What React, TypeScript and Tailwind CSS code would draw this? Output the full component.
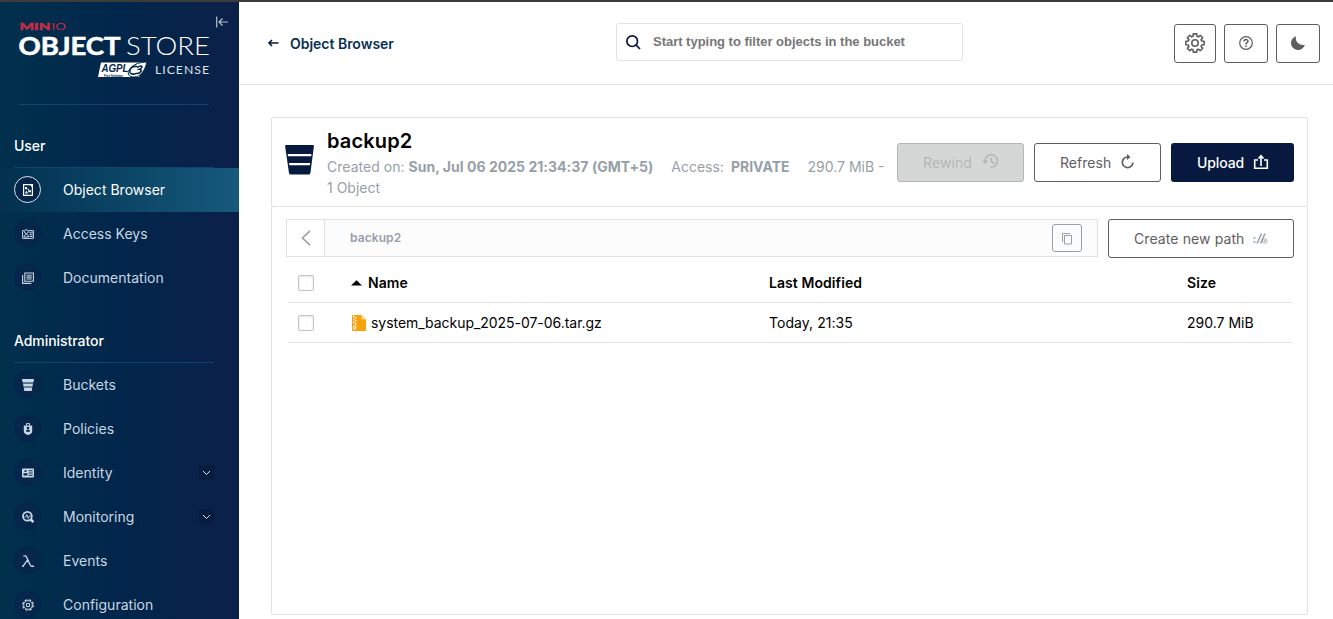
import type { ReactNode } from "react";

function Logo() {
  return (
    <svg width="192" height="58" viewBox="0 0 192 58" fill="#fff" fontFamily="Lato, sans-serif">
      <text x="1.5" y="9.700" fontSize="10" fontWeight="900" fill="#c72c48" stroke="#c72c48" strokeWidth=".4" textLength="31" lengthAdjust="spacingAndGlyphs">MIN</text>
      <text x="33.500" y="9.700" fontSize="10" fontWeight="400" fill="#c72c48" textLength="14.500" lengthAdjust="spacingAndGlyphs">IO</text>
      <text x="0.500" y="35.300" fontSize="25" fontWeight="700" stroke="#fff" strokeWidth=".6" textLength="102" lengthAdjust="spacingAndGlyphs">OBJECT</text>
      <text x="108" y="35.300" fontSize="25" fontWeight="300" textLength="84" lengthAdjust="spacingAndGlyphs">STORE</text>
      <path d="M83 42.500h45l-7 14.500H80z" />
      <text x="83.500" y="52" fontSize="11" fontWeight="700" fontStyle="italic" fill="#03254b" fontFamily="Liberation Sans, sans-serif" textLength="27" lengthAdjust="spacingAndGlyphs">AGPL</text>
      <text x="86" y="56.600" fontSize="3" fontWeight="700" fill="#03254b" fontFamily="Liberation Sans, sans-serif" textLength="19">Free Software</text>
      <path d="M129 42c-8 0-15 3-18 8-2 4 0 7 5 7 7 0 11-7 13-15z" stroke="#03254b" strokeWidth="1" />
      <path d="M119 46.500c-5-1-8 3-7 6 1 2 4 2 6 1M119 47.500c5-3 7-.5 2.500 1.800 3.500.2 1 4.700-4 4.200" fill="none" stroke="#03254b" strokeWidth="1.600" />
      <text x="137" y="53.500" fontSize="12.300" fontWeight="400" fill="#dbe3ea" textLength="54" lengthAdjust="spacing">LICENSE</text>
    </svg>
  );
}

const icons: Record<string, ReactNode> = {
  browser: (
    <>
      <path d="M1.600.6H10.400V11.400H1.600z" fill="none" stroke="currentColor" strokeWidth="1.200" />
      <path d="M7.500.6h3v3zM3 3h2.200v2.200H3zM6.300 6.200h2.700v2H6.300zM3 9.600l1.500-3 1.500 3zM5.500 5.400l.8-.8.8.8-.8.8z" />
    </>
  ),
  keys: (
    <>
      <path d="M2 2.600H.6v7.800h10.800V2.600H6.600" fill="none" stroke="currentColor" strokeWidth="1" />
      <path d="M7.600 3.800h1.200v1.600H7.600zM9.400 3.800h1.200v1.600H9.400zM7.600 6.200h3v1h-3zM7.600 8h3v1h-3z" />
      <circle cx="4.300" cy="3.600" r="1.900" fill="none" stroke="currentColor" />
      <path d="M2 9c0-3.500 4.600-3.500 4.600 0z" fill="none" stroke="currentColor" />
    </>
  ),
  docs: (
    <path d="M2.800 1h8.600v8.200H2.800zM.6 3v8.400h8.800M4.500 3.200h5.200M4.500 5.100h5.200M4.500 7h5.200" fill="none" stroke="currentColor" strokeWidth="1.100" />
  ),
  bucket: (
    <>
      <path d="M0 0h12l-.5 3H.5z" />
      <path d="M.6 3h10.800l-.3 1.500H.9z" opacity=".5" />
      <path d="M1 4.700h10l-.5 2.600h-9z" />
      <path d="M1.500 7.300h9l-.2 1.400H1.700z" opacity=".5" />
      <path d="M1.800 8.800h8.400L9.700 12H2.300z" />
    </>
  ),
  policy: (
    <>
      <path d="M4.500 2.500V.6h3v1.900" fill="none" stroke="currentColor" strokeWidth="1" />
      <path d="M1.800 2.400h8.400v5.800c0 2.300-2.200 3.100-4.200 3.800-2-.7-4.200-1.500-4.200-3.800z" />
      <g fill="#06264b"><circle cx="6" cy="5" r="1.300" /><path d="M4 8.800c0-3 4-3 4 0z" /></g>
    </>
  ),
  identity: (
    <path fillRule="evenodd" d="M1 1.500h10q1 0 1 1v7q0 1-1 1H1q-1 0-1-1v-7q0-1 1-1zM2.500 3.200h2v1.900h-2zM1.500 6.200h4v2.400h-4zM6.700 3.300h4v1h-4zM6.700 5.500h4v1h-4zM6.700 7.700h4v1h-4z" />
  ),
  monitor: (
    <>
      <circle cx="5.400" cy="5.300" r="4.400" fill="none" stroke="currentColor" strokeWidth="1.800" />
      <path d="M2.500 6h1.300l1-2.500 1.400 4 1-2.500h1.500" fill="none" stroke="currentColor" strokeWidth=".9" />
      <path d="M7.600 9.300 9.600 7.300l2.600 2.900-1.700 1.900z" />
    </>
  ),
  lambda: (
    <path d="M1.300.9h1.900c.6 0 .9.300 1.200.9L8.300 10.200c.4.800.8 1.100 1.500 1.100H12M5.600 4.800 1 11.300H0" fill="none" stroke="currentColor" strokeWidth="1.400" />
  ),
  config: (
    <>
      <circle cx="6" cy="6" r="5.200" fill="none" stroke="currentColor" strokeWidth="1.300" strokeDasharray="2.600 1.480" />
      <circle cx="6" cy="6" r="4.300" fill="none" stroke="currentColor" strokeWidth=".9" />
      <path d="M4.500 4.500h3v3h-3z" fill="none" stroke="currentColor" />
    </>
  ),
};

function NavItem({ icon, label, active, expand }: { icon: string; label: string; active?: boolean; expand?: boolean }) {
  return (
    <div className={`flex h-11 shrink-0 items-center pb-px pl-3.5 pr-[25px] ${active ? "bg-gradient-to-r from-[#03304f] to-[#165a7c] text-white" : "text-[#c8d7e4]"}`}>
      <span className={`flex size-[27px] items-center justify-center rounded-full border ${active ? "border-[#dce6ee] bg-[#06254a]" : "border-[#03234a] bg-[#06264b]"}`}>
        <svg width="12" height="12" viewBox="0 0 12 12" fill="currentColor">{icons[icon]}</svg>
      </span>
      <span className="ml-[22px] flex-1 pb-px text-[14px] tracking-[0.01px]">{label}</span>
      {expand && (
        <span className="flex size-[15px] items-center justify-center bg-[#081c3f]">
          <svg width="9" height="6" viewBox="0 0 9 6" fill="none" stroke="#dce6ee" strokeWidth="1"><path d="m1 1 3.500 3.500L8 1" /></svg>
        </span>
      )}
    </div>
  );
}

function NavHeading({ children }: { children: ReactNode }) {
  return (
    <div className="ml-3.5 flex h-[63px] w-[200px] shrink-0 items-center border-b border-[#0f446f] pt-[19px] text-[14px] font-medium tracking-[-0.05px] text-white">{children}</div>
  );
}

function Sidebar() {
  return (
    <aside className="flex w-[239px] shrink-0 flex-col overflow-hidden bg-[linear-gradient(90deg,#01304d_0%,#02264b_50%,#0b2048_100%)]">
      <div className="flex h-[102px] shrink-0 pl-[18px] pt-[18px]">
        <Logo />
        <svg className="-mt-[5px] ml-[5px]" width="14" height="14" viewBox="0 0 14 14" fill="none" stroke="#b5c0cd" strokeWidth="1.200"><path d="M1.700 1.500v11M13 7H4M7.500 3.500 4 7l3.500 3.500" /></svg>
      </div>
      <div className="ml-[19px] h-px w-[190px] shrink-0 bg-[#0f446f]" />
      <NavHeading>User</NavHeading>
      <NavItem icon="browser" label="Object Browser" active />
      <NavItem icon="keys" label="Access Keys" />
      <NavItem icon="docs" label="Documentation" />
      <NavHeading>Administrator</NavHeading>
      <NavItem icon="bucket" label="Buckets" />
      <NavItem icon="policy" label="Policies" />
      <NavItem icon="identity" label="Identity" expand />
      <NavItem icon="monitor" label="Monitoring" expand />
      <NavItem icon="lambda" label="Events" />
      <NavItem icon="config" label="Configuration" />
    </aside>
  );
}

const gearPath = Array.from({ length: 8 }, (_, i) => {
  const c = (i * Math.PI) / 4;
  const pt = (r: number, a: number) => `${(10 + r * Math.cos(c + a)).toFixed(2)} ${(10 + r * Math.sin(c + a)).toFixed(2)}`;
  return `${i ? "L" : "M"}${pt(7, -0.28)}L${pt(9.3, -0.19)}L${pt(9.3, 0.19)}L${pt(7, 0.28)}`;
}).join("") + "Z";

function TopBar() {
  return (
    <header className="flex h-[83px] shrink-0 items-start border-b border-[#e2e2e2]">
      <div className="ml-7 mt-[30px] flex h-[22px] w-[349px] items-center">
        <svg width="13" height="10" viewBox="0 0 13 10" fill="none" stroke="#07193e" strokeWidth="1.600"><path d="M11.500 5H2M5 2 2 5l3 3" /></svg>
        <span className="ml-[10px] text-[14px] font-semibold tracking-[-0.02px] text-[#073052]">Object Browser</span>
      </div>
      <div className="mt-[21px] flex h-[38px] w-[347px] items-center rounded-[3px] border border-[#e2e2e2] pl-[9px]">
        <svg width="15" height="15" viewBox="0 0 15 15" fill="none" stroke="#07193e" strokeWidth="1.700"><circle cx="6.200" cy="6.200" r="5.300" /><path d="m10.200 10.200 3.800 3.800" /></svg>
        <span className="ml-3 pb-px font-['Liberation_Sans',Arial,sans-serif] text-[13px] font-bold tracking-[-0.02px] text-[#767676]">Start typing to filter objects in the bucket</span>
      </div>
      <div className="ml-auto mr-[13px] mt-[22px] flex gap-2 text-[#5e5e5e]">
        <button className="flex h-[39px] w-[42px] items-center justify-center rounded-[3px] border border-[#5e5e5e] pb-px">
          <svg width="22" height="22" viewBox="-1 -1 22 22" fill="none" stroke="currentColor" strokeWidth="1.600" strokeLinejoin="round"><path d={gearPath} /><circle cx="10" cy="10" r="3.200" /></svg>
        </button>
        <button className="flex h-[39px] w-11 items-center justify-center rounded-[3px] border border-[#5e5e5e] pb-px">
          <svg width="14" height="14" viewBox="0 0 14 14" fill="none" stroke="currentColor" strokeWidth="1.200"><circle cx="7" cy="7" r="6.300" /><path d="M5 5.500c0-2.500 4-2.500 4-.2C9 6.700 7 6.700 7 8.400M7 9.500V11" strokeWidth="1.500" /></svg>
        </button>
        <button className="flex h-[39px] w-11 items-center justify-center rounded-[3px] border border-[#5e5e5e] pb-px">
          <svg width="14" height="14" viewBox="0 0 14 14" fill="currentColor"><path d="M5 .3A7 7 0 1 0 13.800 8.700 7 7 0 0 1 5 .3z" /></svg>
        </button>
      </div>
    </header>
  );
}

function BucketHeader() {
  return (
    <section className="flex h-[90px] shrink-0 rounded-[2px] border border-[#e2e2e2] pr-[13px]">
      <svg className="ml-[13px] mt-[27px] shrink-0" width="29" height="30" viewBox="0.500 0 29 30" preserveAspectRatio="none" fill="#07193e"><path d="M1.700 0h26.600q1.300 0 1.100 1.300L25.900 28q-.3 1.600-1.700 1.600H6.200q-1.500 0-1.700-1.600L.6 1.300Q.4 0 1.700 0z" /><path d="M3.200 9h23.600v2.200H3.500zM4.500 18h21v2.200H4.800z" fill="#fff" /></svg>
      <div className="ml-[13px] w-[570px] shrink-0 pt-[11px]">
        <h1 className="text-[20px] font-semibold leading-6 tracking-[0.15px] text-black">backup2</h1>
        <div className="mt-[3px] text-[14px] leading-[21px] text-[#969fa8]">
          <div className="flex whitespace-nowrap">
            <span className="tracking-[0.03px]">Created on: <b className="font-bold">Sun, Jul 06 2025 21:34:37 (GMT+5)</b></span>
            <span className="ml-[18px]">Access:</span>
            <b className="ml-[7px] font-bold">PRIVATE</b>
            <span className="ml-[18px]">290.7 MiB -</span>
          </div>
          <div>1 Object</div>
        </div>
      </div>
      <div className="mt-[25px] flex h-[39px] gap-2.5 text-[14px]">
        <button className="flex w-[127px] items-center rounded-[3px] border border-[#b4b6b6] bg-[#d5d7d7] pl-[25px] tracking-[0.1px] text-[#b4b6b6]">
          Rewind
          <svg className="-mt-1 ml-[10px]" width="17" height="14" viewBox="0 0 17 14" fill="none" stroke="currentColor" strokeWidth="1.600"><path d="M3.200 8A6.200 6.200 0 1 1 8.500 13M9.300 4v3.500l3 2" /><path d="M0 6.500h6.500L3.200 10z" fill="currentColor" stroke="none" /></svg>
        </button>
        <button className="flex w-[127px] items-center rounded-[3px] border border-[#5e5e5e] pl-[25px] tracking-[0.04px] text-[#5e5e5e]">
          Refresh
          <svg className="-mt-[3px] ml-[10px]" width="14" height="15" viewBox="0 0 14 15" fill="none" stroke="currentColor" strokeWidth="1.700"><path d="M6.500 3A5.300 5.300 0 1 0 11.900 8.500" /><path d="M6 0v6l3.500-3z" fill="currentColor" stroke="none" /></svg>
        </button>
        <button className="flex w-[123px] items-center rounded-[3px] bg-[#07193e] pl-[26px] font-medium tracking-[-0.1px] text-white">
          Upload
          <svg className="-mt-[2px] ml-[9px]" width="16" height="16" viewBox="0 0 16 16" fill="none" stroke="currentColor" strokeWidth="1.600"><path d="M5 6H1.700v8.200h12.600V6H11M8 12V3" /><path d="M4.500 4.500h7L8 .5z" fill="currentColor" stroke="none" /></svg>
        </button>
      </div>
    </section>
  );
}

function Checkbox() {
  return <span className="block size-4 rounded-[2px] border border-[#c3c3c3] bg-white shadow-[inset_0_1px_3px_rgba(0,0,0,0.1)]" />;
}

function ObjectTable() {
  return (
    <div className="ml-4 mr-[15px] text-[14px] text-black">
      <div className="flex h-10 items-center border-b border-[#e2e2e2] pl-2.5 font-semibold tracking-[0.07px]">
        <Checkbox />
        <svg className="ml-[37px] mt-px" width="11" height="6" viewBox="0 0 11 6"><path d="M0 5.500 5.500.3 11 5.500z" /></svg>
        <span className="ml-1.5 w-[401px]">Name</span>
        <span className="w-[418px]">Last Modified</span>
        <span>Size</span>
      </div>
      <div className="flex h-10 items-center border-b border-[#e2e2e2] pl-2.5">
        <Checkbox />
        <svg className="ml-[38px]" width="14" height="16" viewBox="0 0 14 16"><path d="M0 0h9.500L14 4.500V16H0z" fill="#f6a30d" /><path d="M9.500 0v4.500H14z" fill="#fbd07e" /><path d="M1 1.500h1.500M3 3h1.500M1 4.500h1.500M3 6h1.500M1 7.500h1.500M3 9h1.500" stroke="#fff" strokeWidth="1.400" /><path d="M1.700 11h2v3h-2z" fill="none" stroke="#fff" /></svg>
        <span className="ml-[5px] w-[398px] tracking-[-0.04px]">system_backup_2025-07-06.tar.gz</span>
        <span className="w-[418px] tracking-[0.05px]">Today, 21:35</span>
        <span>290.7 MiB</span>
      </div>
    </div>
  );
}

export default function App() {
  return (
    <div className="flex h-[619px] w-[1333px] flex-col overflow-hidden border-t-2 border-[#3c3c3c] bg-white font-['Inter',sans-serif]">
      <div className="flex min-h-0 flex-1">
        <Sidebar />
        <main className="flex min-w-0 flex-1 flex-col">
          <TopBar />
          <div className="ml-8 mr-[25px] mt-8 flex flex-col">
            <BucketHeader />
            <section className="-mt-px h-[409px] shrink-0 rounded-[2px] border border-[#e2e2e2]">
              <div className="ml-3.5 mr-[13px] mt-3 flex h-[39px] gap-2.5">
                <div className="flex h-[38px] flex-1 items-center border border-[#e2e2e2] bg-[#fcfcfc]">
                  <span className="flex h-full w-[38px] items-center justify-center border-r border-[#e2e2e2] bg-white">
                    <svg width="10" height="16" viewBox="0 0 10 16" fill="none" stroke="#969fa8" strokeWidth="1.600"><path d="M9 .8 1.500 8 9 15.200" /></svg>
                  </span>
                  <span className="ml-[25px] text-[12px] font-semibold tracking-[0.08px] text-[#969fa8]">backup2</span>
                  <span className="ml-auto mr-[15px] flex h-7 w-[30px] items-center justify-center rounded-[3px] border border-[#969fa8]">
                    <svg className="mt-px" width="12" height="13" viewBox="0 0 12 13" fill="none" stroke="#969fa8" strokeWidth="1"><path d="M3.500 3.500h7v8.500h-7zM1.500 10V1.500H9" /></svg>
                  </span>
                </div>
                <button className="flex w-[186px] items-center rounded-[3px] border border-[#5e5e5e] pl-[25px] text-[14px] tracking-[0.1px] text-[#5e5e5e]">
                  Create new path
                  <svg className="ml-[9px]" width="15" height="11" viewBox="0 0 15 11" fill="none" stroke="#969fa8"><path d="M.5 5h2M.5 9h2" strokeWidth="1.600" /><path d="M4 10.500 8.500.5M7.500 10.500 12 .5" strokeWidth="1.500" /><circle cx="11.700" cy="8" r="2.300" strokeWidth=".8" /><path d="M11.700 6.800v2.400M10.500 8h2.400" strokeWidth=".7" /></svg>
                </button>
              </div>
              <div className="mt-[5px]"><ObjectTable /></div>
            </section>
          </div>
        </main>
      </div>
    </div>
  );
}
